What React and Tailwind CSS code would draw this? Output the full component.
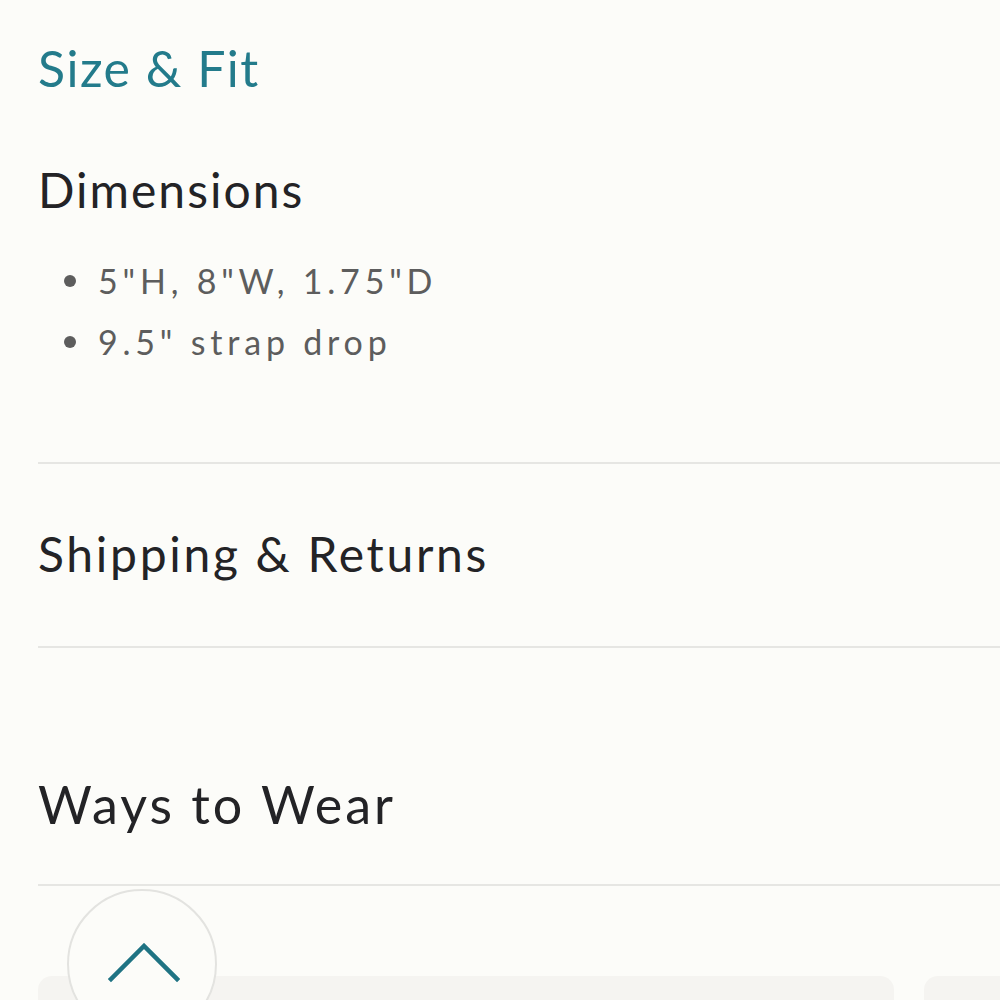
// Collapsible product detail section
const Section = ({ title, className = "", textClass = "" }) => (
  <div className={`border-b-2 border-[#e6e6e3] ${className}`}>
    <h3 className={`leading-none text-[#232326] ${textClass}`}>{title}</h3>
  </div>
);

export default function App() {
  return (
    <div
      className="relative w-[1000px] h-[1000px] overflow-hidden bg-[#fcfcf9]"
      style={{ fontFamily: 'Lato, "Open Sans", sans-serif' }}
    >
      <div className="pl-[38px]">
        <h2 className="pt-[43px] text-[50px] leading-none text-[#237b8b] tracking-[1.5px]">Size &amp; Fit</h2>

        <div className="border-b-2 border-[#e6e6e3]">
          <h3 className="mt-[73px] text-[48px] leading-none text-[#232326] tracking-[2px]">Dimensions</h3>
          <ul className="mt-[36px] pb-[90px] text-[34px] leading-[61px] text-[#5d5d5d] tracking-[4.8px]">
            <li className="flex items-center">
              <span className="w-[12px] h-[12px] rounded-full bg-[#5d5d5d] ml-[26px] mr-[22px]"></span>
              5"H, 8"W, 1.75"D
            </li>
            <li className="flex items-center">
              <span className="w-[12px] h-[12px] rounded-full bg-[#5d5d5d] ml-[26px] mr-[22px]"></span>
              9.5" strap drop
            </li>
          </ul>
        </div>

        <Section
          title="Shipping & Returns"
          className="pt-[66px] pb-[68px]"
          textClass="text-[48px] tracking-[2.7px]"
        />
        <Section
          title="Ways to Wear"
          className="pt-[130px] pb-[54px]"
          textClass="text-[52px] tracking-[3px]"
        />

        <div className="mt-[90px] flex gap-[30px]">
          <div className="w-[856px] h-[200px] shrink-0 rounded-[14px] bg-[#f5f4f1]"></div>
          <div className="w-[856px] h-[200px] shrink-0 rounded-[14px] bg-[#f5f4f1]"></div>
        </div>
      </div>

      {/* Back to top button */}
      <button className="absolute left-[67px] top-[889px] w-[150px] h-[150px] rounded-full border-2 border-[#e3e3e0] bg-[#fcfcf9]">
        <svg
          className="absolute left-[39px] top-[52px]"
          width="72"
          height="40"
          viewBox="0 0 72 40"
          fill="none"
          stroke="#1f7383"
          strokeWidth="4.5"
          strokeLinecap="square"
        >
          <polyline points="3,36 36,3 69,36" />
        </svg>
      </button>
    </div>
  );
}
